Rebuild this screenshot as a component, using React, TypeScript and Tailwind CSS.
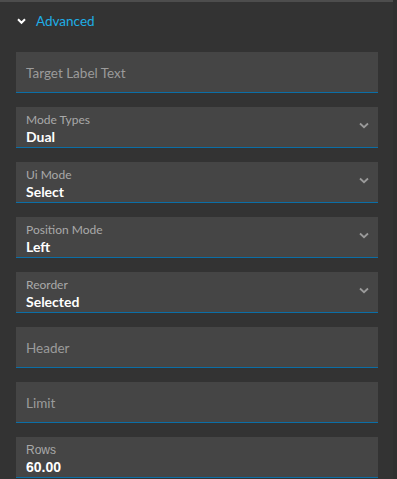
import React from "react";

const font = { fontFamily: "Lato, 'Open Sans', sans-serif" };

function Chevron() {
  return (
    <svg width="10" height="7" viewBox="0 0 10 7" className="absolute right-[9px] top-[15px]">
      <path d="M1 1.5 L5 5.2 L9 1.5" fill="none" stroke="#9a9a9a" strokeWidth="1.8" />
    </svg>
  );
}

function Placeholder({ text }: { text: string }) {
  return (
    <div className="h-[41px] bg-[#454545] border-b border-[#0b6ea6] flex items-center pl-[10px] pt-[2px] mb-[14px]">
      <span className="text-[13.5px] text-[#9b9b9b]" style={font}>{text}</span>
    </div>
  );
}

function Select({ label, value }: { label: string; value: string }) {
  return (
    <div className="relative h-[41px] bg-[#454545] border-b border-[#0b6ea6] pl-[10px] pt-[5px] mb-[14px]">
      <div className="text-[12px] leading-[15px] text-[#a9a9a9]" style={font}>{label}</div>
      <div className="text-[14px] leading-[19px] font-bold text-white" style={font}>{value}</div>
      <Chevron />
    </div>
  );
}

export default function App() {
  return (
    <div className="w-[397px] h-[479px] bg-[#333333] flex overflow-hidden">
      <div className="w-[393px] flex flex-col">
        <div className="h-[2px] bg-[#4d4d4d]" />
        <div className="h-[38px] flex items-center pl-[17px] pt-[1px]">
          <svg width="9" height="7" viewBox="0 0 9 7">
            <path d="M1 1.3 L4.5 4.8 L8 1.3" fill="none" stroke="#ffffff" strokeWidth="2" />
          </svg>
          <span className="ml-[10px] text-[13.5px] text-[#1eaee6]" style={font}>Advanced</span>
        </div>
        <div className="pl-[16px] pr-[15px] pt-[12px]">
          <Placeholder text="Target Label Text" />
          <Select label="Mode Types" value="Dual" />
          <Select label="Ui Mode" value="Select" />
          <Select label="Position Mode" value="Left" />
          <Select label="Reorder" value="Selected" />
          <Placeholder text="Header" />
          <Placeholder text="Limit" />
          <div className="relative h-[41px] bg-[#454545] border-b border-[#0b6ea6] pl-[10px] pt-[6px]">
            <div className="text-[12px] leading-[15px] text-[#a9a9a9]" style={{ fontFamily: "'Liberation Sans', Arial, sans-serif" }}>Rows</div>
            <div className="text-[14px] leading-[18px] font-bold text-white" style={{ fontFamily: "'Liberation Sans', Arial, sans-serif" }}>60.00</div>
          </div>
        </div>
      </div>
      <div className="w-[4px] bg-[#303030]" />
    </div>
  );
}
